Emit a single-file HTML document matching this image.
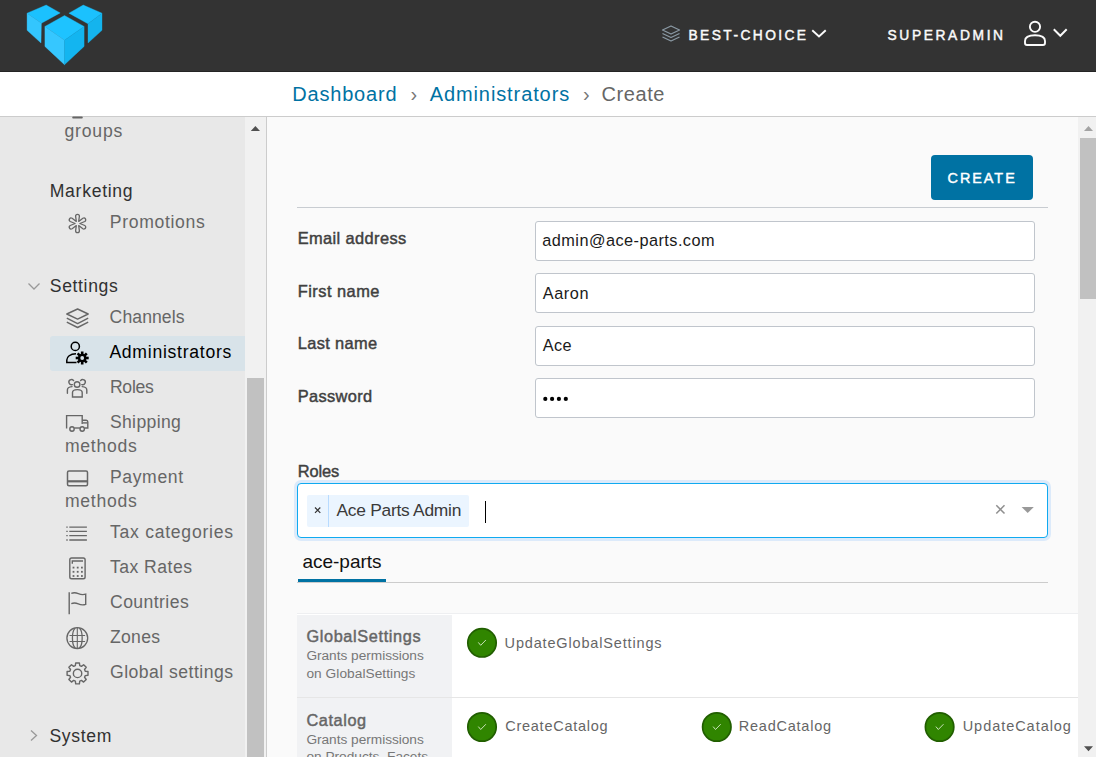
<!DOCTYPE html>
<html><head><meta charset="utf-8"><style>
html,body{margin:0;padding:0;width:1096px;height:757px;overflow:hidden;background:#fafafa;}
body{position:relative;font-family:"Liberation Sans",sans-serif;}
.a{position:absolute;}
.t{position:absolute;white-space:pre;}
</style></head><body>
<div class="a" style="left:0;top:0;width:1096px;height:72px;background:#333;"></div>
<div class="a" style="left:0;top:71px;width:1096px;height:1px;background:#242424;"></div>
<div class="a" style="left:0;top:72px;width:1096px;height:44px;background:#fff;border-bottom:1px solid #ccc;"></div>
<div class="a" style="left:0;top:117px;width:245px;height:640px;background:#e8e8e8;"></div>
<div class="a" style="left:245px;top:117px;width:21px;height:640px;background:#f1f1f1;"></div>
<div class="a" style="left:247px;top:378px;width:17px;height:379px;background:#c1c1c1;"></div>
<div class="a" style="left:266px;top:117px;width:1px;height:640px;background:#ccc;"></div>
<div class="a" style="left:50px;top:336px;width:195px;height:35px;background:#d8e3e9;border-radius:3px 0 0 3px;"></div>
<div class="a" style="left:1078px;top:117px;width:18px;height:640px;background:#f1f1f1;"></div>
<div class="a" style="left:1080px;top:138px;width:16px;height:161px;background:#c1c1c1;"></div>
<div class="a" style="left:931px;top:155px;width:102px;height:45px;background:#0072a3;border-radius:4px;"></div>
<div class="a" style="left:297px;top:207px;width:751px;height:1px;background:#c8ccd1;"></div>
<div class="a" style="left:535px;top:221px;width:498px;height:38px;background:#fff;border:1px solid #c0c5cc;border-radius:3px;"></div>
<div class="a" style="left:535px;top:273px;width:498px;height:38px;background:#fff;border:1px solid #c0c5cc;border-radius:3px;"></div>
<div class="a" style="left:535px;top:326px;width:498px;height:38px;background:#fff;border:1px solid #c0c5cc;border-radius:3px;"></div>
<div class="a" style="left:535px;top:378px;width:498px;height:38px;background:#fff;border:1px solid #c0c5cc;border-radius:3px;"></div>
<div class="a" style="left:297px;top:483px;width:749px;height:53px;background:#fff;border:1px solid #10aaf0;border-radius:4px;box-shadow:0 0 0 3px #dceafa;"></div>
<div class="a" style="left:307px;top:495px;width:162px;height:32px;background:#ebf5ff;border-radius:2px;"></div>
<div class="a" style="left:328px;top:495px;width:1px;height:32px;background:#b8dbff;"></div>
<div class="a" style="left:485px;top:501px;width:1px;height:22px;background:#000;"></div>
<div class="a" style="left:297px;top:582px;width:751px;height:1px;background:#ccc;"></div>
<div class="a" style="left:298px;top:579px;width:88px;height:3px;background:#0072a3;"></div>
<div class="a" style="left:297px;top:613px;width:781px;height:144px;background:#fff;border-top:1px solid #eeeff1;"></div>
<div class="a" style="left:297px;top:615px;width:155px;height:142px;background:#f1f2f4;"></div>
<div class="a" style="left:297px;top:697px;width:781px;height:1px;background:#e6e6e6;"></div>
<svg class="a" style="left:0;top:0" width="1096" height="757" viewBox="0 0 1096 757">
<!-- logo -->
<g stroke-width="0.35">
<polygon points="27.05,13.15 46.2,5.05 60.2,12.9 41.4,23.3" fill="#1bc1fe" stroke="#1bc1fe"/>
<polygon points="27.05,13.15 41.4,23.3 41,43 27.05,30.3" fill="#33c6fe" stroke="#33c6fe"/>
<polygon points="68.9,13.15 83.25,5.05 102,13.15 88,23.8" fill="#1bc1fe" stroke="#1bc1fe"/>
<polygon points="88,23.8 102,13.15 102,30.3 88,43" fill="#14b4ee" stroke="#14b4ee"/>
<polygon points="64.5,15.5 84.1,26.4 64.5,40.3 44.9,26.4" fill="#1ec3ff" stroke="#1ec3ff"/>
<polygon points="44.9,26.4 64.5,40.3 64.5,64.7 44.9,46.4" fill="#36c7ff" stroke="#36c7ff"/>
<polygon points="64.5,40.3 84.1,26.4 84.1,46.4 64.5,64.7" fill="#13b5f0" stroke="#13b5f0"/>
</g>
<!-- header layers icon -->
<g fill="none" stroke="#8b9aa5" stroke-width="1.3" stroke-linejoin="round">
<polygon points="662.5,30 671,26 679.5,30 671,34"/>
<polyline points="662.5,33.5 671,37.5 679.5,33.5"/>
<polyline points="662.5,37 671,41 679.5,37"/>
</g>
<g fill="none" stroke="#fafafa" stroke-width="2" stroke-linecap="square">
<polyline points="813,31 819,36.5 825,31"/>
<polyline points="1054.5,30 1060.3,35.8 1066,30"/>
<circle cx="1035" cy="26.8" r="5.1" stroke-width="1.9"/>
<path d="M1025 43 V41 C1025 37 1029.5 35.3 1035 35.3 C1040.5 35.3 1045 37 1045 41 V43 Q1045 45 1043 45 H1027 Q1025 45 1025 43 Z" stroke-linejoin="round" stroke-width="1.9"/>
</g>
<!-- sidebar scroll arrow -->
<polygon points="250.8,131 255.4,126 260,131" fill="#505050"/>
<polygon points="1084,131 1088.5,126 1093,131" fill="#a3a3a3"/>
<polygon points="1084,746.3 1088.5,751.3 1093,746.3" fill="#505050"/>
<!-- small bar top sidebar -->
<rect x="72.2" y="116.6" width="10.6" height="1.9" rx="0.9" fill="#666"/>
<!-- chevrons sidebar -->
<polyline points="28.5,283.5 34,289 39.5,283.5" fill="none" stroke="#999" stroke-width="1.3"/>
<polyline points="31,730.5 36.5,735.5 31,740.5" fill="none" stroke="#999" stroke-width="1.3"/>
<!-- promotions icon -->
<g fill="none" stroke="#666" stroke-width="1.3" stroke-linejoin="round">
<path d="M76.30 221.42 L75.60 216.20 A1.9 1.9 0 0 1 79.40 216.20 L78.70 221.42 L82.87 218.20 A1.9 1.9 0 0 1 84.77 221.50 L79.90 223.50 L84.77 225.50 A1.9 1.9 0 0 1 82.87 228.80 L78.70 225.58 L79.40 230.80 A1.9 1.9 0 0 1 75.60 230.80 L76.30 225.58 L72.13 228.80 A1.9 1.9 0 0 1 70.23 225.50 L75.10 223.50 L70.23 221.50 A1.9 1.9 0 0 1 72.13 218.20 L76.30 221.42 Z"/>
</g>
<!-- channels icon -->
<g fill="none" stroke="#666" stroke-width="1.4" stroke-linejoin="round">
<polygon points="66.8,314 77.6,309 88.2,314 77.6,319.1"/>
<polyline points="66.8,318.2 77.6,323.6 88.2,318.2"/>
<polyline points="66.8,322.2 77.6,327.5 88.2,322.2"/>
</g>
<!-- administrators icon -->
<g>
<circle cx="75.3" cy="346.4" r="4.1" fill="none" stroke="#000" stroke-width="1.5"/>
<path d="M76 353.8 C70 353.8 66.8 357 66.8 360 V362.6 H76.5" fill="none" stroke="#000" stroke-width="1.5"/>
<g transform="translate(82.2,358)">
<circle r="4.3" fill="#000"/>
<g fill="#000"><rect x="-1.3" y="-6.5" width="2.6" height="13"/><rect x="-1.3" y="-6.5" width="2.6" height="13" transform="rotate(45)"/><rect x="-1.3" y="-6.5" width="2.6" height="13" transform="rotate(90)"/><rect x="-1.3" y="-6.5" width="2.6" height="13" transform="rotate(135)"/></g>
<circle r="1.9" fill="#d8e3e9"/>
</g>
</g>
<!-- roles icon -->
<g fill="none" stroke="#666" stroke-width="1.4" stroke-linecap="round">
<circle cx="77.1" cy="384.5" r="2.8"/>
<path d="M72.5 397 V392.5 C72.5 390.5 74.5 389.6 77.3 389.6 C80.2 389.6 82.2 390.5 82.2 392.5 V397 Z"/>
<path d="M73.6 380.6 A2.6 2.6 0 1 0 72.4 384.6"/>
<path d="M80.6 380.6 A2.6 2.6 0 1 1 81.8 384.6"/>
<path d="M72 386.6 C69 386.8 67.4 388 67.4 390 V393.3"/>
<path d="M82.2 386.6 C85.2 386.8 86.8 388 86.8 390 V393.3"/>
</g>
<!-- truck icon -->
<g fill="none" stroke="#666" stroke-width="1.4">
<path d="M66.6 428.5 V415.6 H82.2 V424"/>
<path d="M82.2 420.2 H86.2 C87.3 420.2 87.8 421 87.8 422 V428 H84.6"/>
<path d="M83 422.9 H87.5"/>
<circle cx="72" cy="429" r="2.2"/>
<circle cx="82.2" cy="429" r="2.2"/>
<path d="M74.3 428 H79.9"/>
</g>
<!-- payment icon -->
<g fill="none" stroke="#666">
<rect x="67.5" y="471" width="20" height="14.8" rx="1.5" stroke-width="1.5"/>
<path d="M67.5 481.3 H87.5" stroke-width="2.2"/>
</g>
<!-- tax categories -->
<g stroke="#666" stroke-width="1.3">
<path d="M69.3 527.1 H86.9 M69.3 531.4 H86.9 M69.3 535.6 H86.9 M69.3 540 H86.9"/>
<path d="M66.3 527.1 H67.7 M66.3 531.4 H67.7 M66.3 535.6 H67.7 M66.3 540 H67.7"/>
</g>
<!-- calculator -->
<g fill="none" stroke="#666" stroke-width="1.4">
<rect x="69.8" y="558" width="15.3" height="20.8" rx="1.8"/>
<path d="M72.3 563.8 V561 H83"/>
</g>
<g fill="#666">
<rect x="72.6" y="566.7" width="1.8" height="1.8"/><rect x="76.8" y="566.7" width="1.8" height="1.8"/><rect x="81" y="566.7" width="1.8" height="1.8"/>
<rect x="72.6" y="570.9" width="1.8" height="1.8"/><rect x="76.8" y="570.9" width="1.8" height="1.8"/><rect x="81" y="570.9" width="1.8" height="1.8"/>
<rect x="72.6" y="575.1" width="1.8" height="1.8"/><rect x="76.8" y="575.1" width="1.8" height="1.8"/><rect x="81" y="575.1" width="1.8" height="1.8"/>
</g>
<!-- flag -->
<g fill="none" stroke="#666" stroke-width="1.4">
<path d="M69.2 592.2 V614.3"/>
<path d="M71.3 593.4 C74 592.2 76 592.6 78.3 593.6 C80.8 594.7 83 595 85.7 594.2 V604.4 C83 605.3 80.8 605 78.3 603.9 C76 602.9 74 602.5 71.3 603.7"/>
</g>
<!-- globe -->
<g fill="none" stroke="#666" stroke-width="1.3">
<circle cx="77.3" cy="638.1" r="10.4"/>
<path d="M75.2 628.3 C71.5 631 71.5 645.2 75.2 647.9 M79.4 628.3 C83.1 631 83.1 645.2 79.4 647.9"/>
<path d="M77.3 627.8 V648.4 M69.5 635.5 H85.1 M69.5 641.5 H85.1" stroke-width="1.1"/>
</g>
<!-- gear -->
<g fill="none" stroke="#666" stroke-width="1.4" stroke-linejoin="round">
<path d="M75.34 665.71 L75.71 662.96 L79.39 662.96 L79.76 665.71 L81.43 666.40 L83.63 664.72 L86.23 667.32 L84.55 669.52 L85.24 671.19 L87.99 671.56 L87.99 675.24 L85.24 675.61 L84.55 677.28 L86.23 679.48 L83.63 682.08 L81.43 680.40 L79.76 681.09 L79.39 683.84 L75.71 683.84 L75.34 681.09 L73.67 680.40 L71.47 682.08 L68.87 679.48 L70.55 677.28 L69.86 675.61 L67.11 675.24 L67.11 671.56 L69.86 671.19 L70.55 669.52 L68.87 667.32 L71.47 664.72 L73.67 666.40 Z"/>
<circle cx="77.55" cy="673.4" r="4.2"/>
</g>
<!-- select icons -->
<g stroke="#8f8f8f" stroke-width="1.5">
<path d="M996.3 505.3 L1004.5 513.5 M1004.5 505.3 L996.3 513.5"/>
</g>
<polygon points="1021.6,507 1033.8,507 1027.7,513" fill="#999"/>
<!-- chip x -->
<g stroke="#333" stroke-width="1.2"><path d="M315 507.5 L320.3 512.8 M320.3 507.5 L315 512.8"/></g>
<!-- password dots -->
<g fill="#000">
<circle cx="545.3" cy="398.9" r="2.1"/><circle cx="552.1" cy="398.9" r="2.1"/><circle cx="558.9" cy="398.9" r="2.1"/><circle cx="565.8" cy="398.9" r="2.1"/>
</g>
<!-- check circles -->
<g>
<g transform="translate(482,642.8)"><circle r="14.2" fill="#308500" stroke="#215e00" stroke-width="1.7"/><path d="M-3.7 -0.4 L-1.3 2.5 L3.9 -2.8" fill="none" stroke="#d8ebcc" stroke-width="0.9"/></g>
<g transform="translate(482,727)"><circle r="14.2" fill="#308500" stroke="#215e00" stroke-width="1.7"/><path d="M-3.7 -0.4 L-1.3 2.5 L3.9 -2.8" fill="none" stroke="#d8ebcc" stroke-width="0.9"/></g>
<g transform="translate(716.8,727)"><circle r="14.2" fill="#308500" stroke="#215e00" stroke-width="1.7"/><path d="M-3.7 -0.4 L-1.3 2.5 L3.9 -2.8" fill="none" stroke="#d8ebcc" stroke-width="0.9"/></g>
<g transform="translate(939.6,727)"><circle r="14.2" fill="#308500" stroke="#215e00" stroke-width="1.7"/><path d="M-3.7 -0.4 L-1.3 2.5 L3.9 -2.8" fill="none" stroke="#d8ebcc" stroke-width="0.9"/></g>
</g>
</svg>

<div class="t" style="left:688.50px;top:29.32px;font-size:13.8px;line-height:13.8px;color:#fafafa;letter-spacing:2.405px;-webkit-text-stroke:0.45px #fafafa;">BEST-CHOICE</div>
<div class="t" style="left:887.50px;top:29.32px;font-size:13.8px;line-height:13.8px;color:#fafafa;letter-spacing:2.617px;-webkit-text-stroke:0.45px #fafafa;">SUPERADMIN</div>
<div class="t" style="left:292.30px;top:84.07px;font-size:20px;line-height:20px;color:#0072a3;letter-spacing:0.800px;">Dashboard</div>
<div class="t" style="left:429.70px;top:84.07px;font-size:20px;line-height:20px;color:#0072a3;letter-spacing:0.900px;">Administrators</div>
<div class="t" style="left:601.40px;top:84.07px;font-size:20px;line-height:20px;color:#666;letter-spacing:0.600px;">Create</div>
<div class="t" style="left:410.60px;top:84.07px;font-size:20px;line-height:20px;color:#777;letter-spacing:0.000px;">›</div>
<div class="t" style="left:583.00px;top:84.07px;font-size:20px;line-height:20px;color:#777;letter-spacing:0.000px;">›</div>
<div class="t" style="left:64.40px;top:122.50px;font-size:17.6px;line-height:17.6px;color:#666;letter-spacing:0.840px;">groups</div>
<div class="t" style="left:49.70px;top:183.10px;font-size:17.6px;line-height:17.6px;color:#313131;letter-spacing:0.713px;">Marketing</div>
<div class="t" style="left:109.80px;top:214.10px;font-size:17.6px;line-height:17.6px;color:#666;letter-spacing:0.667px;">Promotions</div>
<div class="t" style="left:49.80px;top:278.10px;font-size:17.6px;line-height:17.6px;color:#313131;letter-spacing:0.629px;">Settings</div>
<div class="t" style="left:109.60px;top:308.60px;font-size:17.6px;line-height:17.6px;color:#666;letter-spacing:0.086px;">Channels</div>
<div class="t" style="left:109.40px;top:344.20px;font-size:17.6px;line-height:17.6px;color:#000;letter-spacing:0.731px;">Administrators</div>
<div class="t" style="left:109.90px;top:379.30px;font-size:17.6px;line-height:17.6px;color:#666;letter-spacing:-0.250px;">Roles</div>
<div class="t" style="left:109.90px;top:414.10px;font-size:17.6px;line-height:17.6px;color:#666;letter-spacing:0.357px;">Shipping</div>
<div class="t" style="left:64.90px;top:438.20px;font-size:17.6px;line-height:17.6px;color:#666;letter-spacing:0.750px;">methods</div>
<div class="t" style="left:109.90px;top:469.10px;font-size:17.6px;line-height:17.6px;color:#666;letter-spacing:0.633px;">Payment</div>
<div class="t" style="left:64.90px;top:492.90px;font-size:17.6px;line-height:17.6px;color:#666;letter-spacing:0.750px;">methods</div>
<div class="t" style="left:110.00px;top:524.20px;font-size:17.6px;line-height:17.6px;color:#666;letter-spacing:0.731px;">Tax categories</div>
<div class="t" style="left:110.00px;top:558.90px;font-size:17.6px;line-height:17.6px;color:#666;letter-spacing:0.463px;">Tax Rates</div>
<div class="t" style="left:110.00px;top:594.10px;font-size:17.6px;line-height:17.6px;color:#666;letter-spacing:0.425px;">Countries</div>
<div class="t" style="left:110.00px;top:629.00px;font-size:17.6px;line-height:17.6px;color:#666;letter-spacing:0.275px;">Zones</div>
<div class="t" style="left:110.00px;top:663.60px;font-size:17.6px;line-height:17.6px;color:#666;letter-spacing:0.471px;">Global settings</div>
<div class="t" style="left:49.40px;top:728.10px;font-size:17.6px;line-height:17.6px;color:#313131;letter-spacing:0.660px;">System</div>
<div class="t" style="left:947.50px;top:170.81px;font-size:14.4px;line-height:14.4px;color:#fff;letter-spacing:1.990px;-webkit-text-stroke:0.45px #fff;">CREATE</div>
<div class="t" style="left:297.70px;top:229.82px;font-size:16.4px;line-height:16.4px;color:#404040;letter-spacing:0.387px;-webkit-text-stroke:0.45px #404040;">Email address</div>
<div class="t" style="left:297.70px;top:283.12px;font-size:16.4px;line-height:16.4px;color:#404040;letter-spacing:0.483px;-webkit-text-stroke:0.45px #404040;">First name</div>
<div class="t" style="left:297.70px;top:335.12px;font-size:16.4px;line-height:16.4px;color:#404040;letter-spacing:0.369px;-webkit-text-stroke:0.45px #404040;">Last name</div>
<div class="t" style="left:297.70px;top:388.02px;font-size:16.4px;line-height:16.4px;color:#404040;letter-spacing:0.364px;-webkit-text-stroke:0.45px #404040;">Password</div>
<div class="t" style="left:297.70px;top:463.12px;font-size:16.4px;line-height:16.4px;color:#404040;letter-spacing:-0.088px;-webkit-text-stroke:0.45px #404040;">Roles</div>
<div class="t" style="left:542.30px;top:231.60px;font-size:16.3px;line-height:16.3px;color:#1a1a1a;letter-spacing:0.456px;">admin@ace-parts.com</div>
<div class="t" style="left:542.70px;top:285.10px;font-size:16.3px;line-height:16.3px;color:#1a1a1a;letter-spacing:0.600px;">Aaron</div>
<div class="t" style="left:542.70px;top:336.90px;font-size:16.3px;line-height:16.3px;color:#1a1a1a;letter-spacing:0.450px;">Ace</div>
<div class="t" style="left:336.40px;top:502.27px;font-size:17.4px;line-height:17.4px;color:#3a3a3a;letter-spacing:-0.257px;">Ace Parts Admin</div>
<div class="t" style="left:302.50px;top:551.52px;font-size:19px;line-height:19px;color:#111;letter-spacing:-0.025px;">ace-parts</div>
<div class="t" style="left:306.40px;top:627.80px;font-size:16.3px;line-height:16.3px;color:#666;letter-spacing:0.642px;-webkit-text-stroke:0.45px #666;">GlobalSettings</div>
<div class="t" style="left:306.40px;top:649.20px;font-size:13.7px;line-height:13.7px;color:#777;letter-spacing:-0.029px;">Grants permissions</div>
<div class="t" style="left:306.40px;top:667.00px;font-size:13.7px;line-height:13.7px;color:#777;letter-spacing:0.056px;">on GlobalSettings</div>
<div class="t" style="left:306.40px;top:711.90px;font-size:16.3px;line-height:16.3px;color:#666;letter-spacing:0.608px;-webkit-text-stroke:0.45px #666;">Catalog</div>
<div class="t" style="left:306.40px;top:732.60px;font-size:13.7px;line-height:13.7px;color:#777;letter-spacing:-0.029px;">Grants permissions</div>
<div class="t" style="left:306.40px;top:750.40px;font-size:13.7px;line-height:13.7px;color:#777;letter-spacing:0.000px;">on Products, Facets</div>
<div class="t" style="left:504.60px;top:635.73px;font-size:14.5px;line-height:14.5px;color:#666;letter-spacing:0.837px;">UpdateGlobalSettings</div>
<div class="t" style="left:505.20px;top:718.83px;font-size:14.5px;line-height:14.5px;color:#666;letter-spacing:0.750px;">CreateCatalog</div>
<div class="t" style="left:738.80px;top:718.83px;font-size:14.5px;line-height:14.5px;color:#666;letter-spacing:0.760px;">ReadCatalog</div>
<div class="t" style="left:962.70px;top:718.83px;font-size:14.5px;line-height:14.5px;color:#666;letter-spacing:0.958px;">UpdateCatalog</div>
</body></html>
